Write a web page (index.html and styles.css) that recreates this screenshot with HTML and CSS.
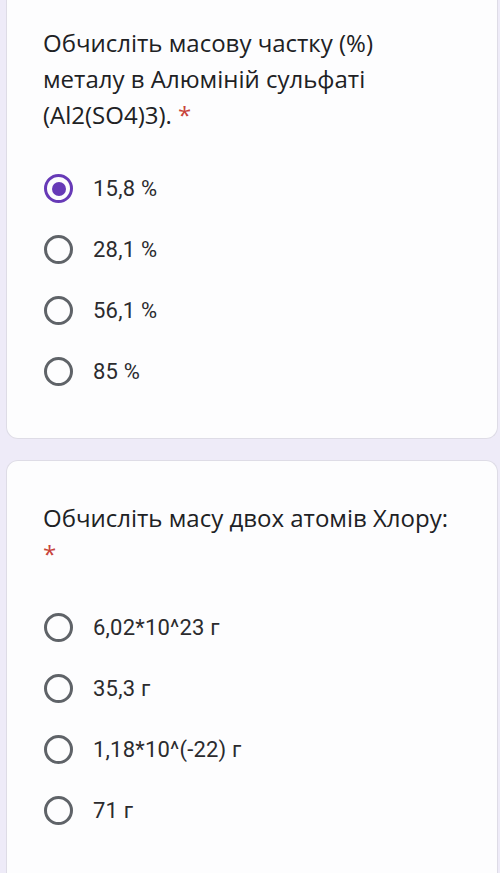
FILE: index.html
```html
<!DOCTYPE html>
<html lang="uk">
<head>
<meta charset="utf-8">
<title>Форма</title>
<link rel="stylesheet" href="styles.css">
</head>
<body>
<main class="page">
  <section class="card card-first">
    <h2 class="question">Обчисліть масову частку (%)<br>металу в Алюміній сульфаті<br>(Al2(SO4)3). <span class="req">*</span></h2>
    <ul class="options">
      <li class="option"><span class="radio checked"></span><span class="label">15,8 %</span></li>
      <li class="option"><span class="radio"></span><span class="label">28,1 %</span></li>
      <li class="option"><span class="radio"></span><span class="label">56,1 %</span></li>
      <li class="option"><span class="radio"></span><span class="label">85 %</span></li>
    </ul>
  </section>
  <section class="card card-second">
    <h2 class="question">Обчисліть масу двох атомів Хлору:<br><span class="req">*</span></h2>
    <ul class="options">
      <li class="option"><span class="radio"></span><span class="label">6,02*10^23 г</span></li>
      <li class="option"><span class="radio"></span><span class="label">35,3 г</span></li>
      <li class="option"><span class="radio"></span><span class="label">1,18*10^(-22) г</span></li>
      <li class="option"><span class="radio"></span><span class="label">71 г</span></li>
    </ul>
  </section>
</main>
</body>
</html>
```
FILE: styles.css
```css
html, body {
  margin: 0;
  padding: 0;
  background: #eeebf8;
}
body {
  font-family: "Open Sans", "Noto Sans", sans-serif;
  color: #202124;
  overflow: hidden;
}
.page {
  display: flex;
  flex-direction: column;
  gap: 21px;
  padding: 0 2px 0 6px;
}
.card {
  background: #fdfdfe;
  border: 1px solid #dedce6;
  border-radius: 12px;
  padding: 0 36px 0 36px;
}
.card-first {
  border-top: none;
  border-top-left-radius: 0;
  border-top-right-radius: 0;
  padding-top: 25px;
  padding-bottom: 36px;
}
.card-second {
  padding-top: 39px;
  padding-bottom: 60px;
  border-bottom: none;
  border-bottom-left-radius: 0;
  border-bottom-right-radius: 0;
}
.question {
  margin: 0;
  font-weight: 400;
  font-size: 24px;
  line-height: 36px;
  letter-spacing: 0;
}
.req {
  color: #c8443a;
}
.options {
  list-style: none;
  margin: 25px 0 0 0;
  padding: 0;
  display: flex;
  flex-direction: column;
}
.option {
  display: flex;
  align-items: center;
  gap: 20px;
  height: 61px;
  padding-left: 1px;
}
.radio {
  width: 29px;
  height: 29px;
  box-sizing: border-box;
  border: 3.5px solid #5f6368;
  border-radius: 50%;
  display: flex;
  align-items: center;
  justify-content: center;
  flex: none;
}
.radio.checked {
  border-color: #673ab7;
}
.radio.checked::after {
  content: "";
  width: 14px;
  height: 14px;
  border-radius: 50%;
  background: #673ab7;
}
.label {
  font-family: Roboto, "Noto Sans", sans-serif;
  font-size: 22px;
  color: #2b2b2e;
  letter-spacing: 0.2px;
}
```
